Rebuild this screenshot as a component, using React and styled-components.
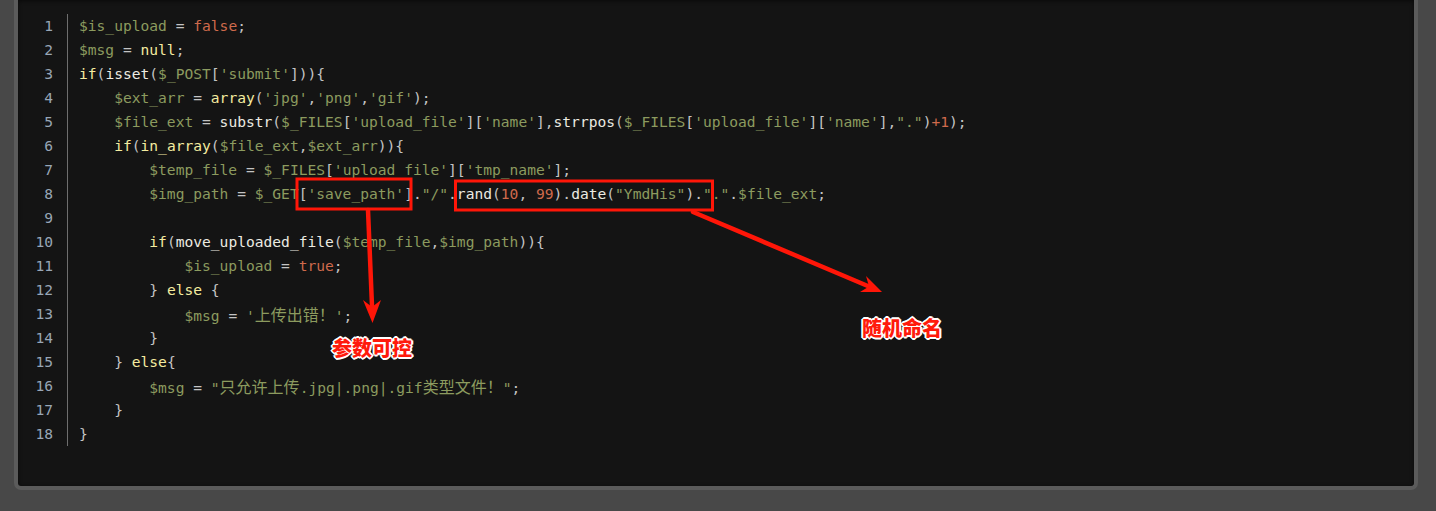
import React from 'react'
import styled, { createGlobalStyle } from 'styled-components'

const GlobalStyle = createGlobalStyle`
  html, body {
    margin: 0;
    padding: 0;
    background: #484848;
  }
`

// 토큰 색상
const colors = {
  v: '#8c9b5f',
  s: '#8c9b5f',
  k: '#f4eca0',
  f: '#ecebe2',
  c: '#cf6a4c',
  p: '#c4c4c4',
}

const Page = styled.div`
  position: relative;
  width: 1436px;
  height: 511px;
  overflow: hidden;
`

const Frame = styled.div`
  margin-left: 14px;
  width: 1404px;
  height: 490px;
  box-sizing: border-box;
  border: 4px solid #5b5b5b;
  border-top: 0;
  border-radius: 0 0 7px 7px;
  background: #141414;
  box-shadow: inset 0 1px 4px rgba(0, 0, 0, 0.6);
`

const CodeBlock = styled.div`
  display: flex;
  padding-top: 14px;
  font-family: "DejaVu Sans Mono", "Liberation Mono", monospace;
  font-size: 14.6px;
  line-height: 24px;
`

const Gutter = styled.div`
  width: 35px;
  padding-right: 14px;
  border-right: 1px solid #6e6e6e;
  text-align: right;
  color: #98a6b6;
`

const Code = styled.div`
  padding-left: 11px;
  white-space: pre;
`

const Line = styled.div`
  height: 24px;
`

const Tok = styled.span`
  color: ${p => colors[p.$t]};
`

const Cjk = styled.span`
  font-family: "Noto Sans CJK SC", sans-serif;
  font-size: 16px;
`

const Overlay = styled.svg`
  position: absolute;
  top: 0;
  left: 0;
  pointer-events: none;
`

const Label = styled.div`
  position: absolute;
  left: ${p => p.$x}px;
  top: ${p => p.$y}px;
  font-family: "Noto Sans CJK SC", sans-serif;
  font-size: 20px;
  font-weight: 900;
  line-height: 24px;
  color: #ff1a0c;
  text-shadow:
    -2px 0 #fff, 2px 0 #fff, 0 -2px #fff, 0 2px #fff,
    -1px -1px #fff, 1px 1px #fff, -1px 1px #fff, 1px -1px #fff;
`

const withCjk = text =>
  text.split(/([\u3000-\u9fff\uff00-\uffef]+)/).map((part, i) =>
    /[\u3000-\u9fff\uff00-\uffef]/.test(part) ? <Cjk key={i}>{part}</Cjk> : part
  )

const code = [
  [['v', '$is_upload'], ['p', ' = '], ['c', 'false'], ['p', ';']],
  [['v', '$msg'], ['p', ' = '], ['k', 'null'], ['p', ';']],
  [['k', 'if'], ['p', '('], ['f', 'isset'], ['p', '('], ['v', '$_POST'], ['p', '['], ['s', "'submit'"], ['p', ']))'], ['p', '{']],
  [['p', '    '], ['v', '$ext_arr'], ['p', ' = '], ['k', 'array'], ['p', '('], ['s', "'jpg'"], ['p', ','], ['s', "'png'"], ['p', ','], ['s', "'gif'"], ['p', ');']],
  [['p', '    '], ['v', '$file_ext'], ['p', ' = '], ['f', 'substr'], ['p', '('], ['v', '$_FILES'], ['p', '['], ['s', "'upload_file'"], ['p', ']['], ['s', "'name'"], ['p', '],'], ['f', 'strrpos'], ['p', '('], ['v', '$_FILES'], ['p', '['], ['s', "'upload_file'"], ['p', ']['], ['s', "'name'"], ['p', '],'], ['s', '"."'], ['p', ')'], ['c', '+1'], ['p', ');']],
  [['p', '    '], ['k', 'if'], ['p', '('], ['k', 'in_array'], ['p', '('], ['v', '$file_ext'], ['p', ','], ['v', '$ext_arr'], ['p', ')){']],
  [['p', '        '], ['v', '$temp_file'], ['p', ' = '], ['v', '$_FILES'], ['p', '['], ['s', "'upload_file'"], ['p', ']['], ['s', "'tmp_name'"], ['p', '];']],
  [['p', '        '], ['v', '$img_path'], ['p', ' = '], ['v', '$_GET'], ['p', '['], ['s', "'save_path'"], ['p', '].'], ['s', '"/"'], ['p', '.'], ['f', 'rand'], ['p', '('], ['c', '10'], ['p', ', '], ['c', '99'], ['p', ').'], ['f', 'date'], ['p', '('], ['s', '"YmdHis"'], ['p', ').'], ['s', '"."'], ['p', '.'], ['v', '$file_ext'], ['p', ';']],
  [],
  [['p', '        '], ['k', 'if'], ['p', '('], ['f', 'move_uploaded_file'], ['p', '('], ['v', '$temp_file'], ['p', ','], ['v', '$img_path'], ['p', ')){']],
  [['p', '            '], ['v', '$is_upload'], ['p', ' = '], ['c', 'true'], ['p', ';']],
  [['p', '        } '], ['k', 'else'], ['p', ' {']],
  [['p', '            '], ['v', '$msg'], ['p', ' = '], ['s', "'上传出错！'"], ['p', ';']],
  [['p', '        }']],
  [['p', '    } '], ['k', 'else'], ['p', '{']],
  [['p', '        '], ['v', '$msg'], ['p', ' = '], ['s', '"只允许上传.jpg|.png|.gif类型文件！"'], ['p', ';']],
  [['p', '    }']],
  [['p', '}']],
]

const App = () => {
  return (
    <Page>
      <GlobalStyle />
      <Frame>
        <CodeBlock>
          <Gutter>
            {code.map((_, i) => <Line key={i}>{i + 1}</Line>)}
          </Gutter>
          <Code>
            {code.map((toks, i) => (
              <Line key={i}>
                {toks.map(([t, text], j) => <Tok key={j} $t={t}>{withCjk(text)}</Tok>)}
              </Line>
            ))}
          </Code>
        </CodeBlock>
      </Frame>

      {/* 빨간 표시 */}
      <Overlay width="1436" height="511" viewBox="0 0 1436 511">
        <g fill="none" stroke="#ff1608" strokeWidth="3">
          <rect x="297" y="179" width="114" height="30" />
          <rect x="455.5" y="181" width="257" height="29" />
        </g>
        <g stroke="#ff1608" strokeLinecap="round">
          <line x1="368" y1="210" x2="372" y2="306" strokeWidth="4.5" />
          <line x1="693" y1="212" x2="869" y2="286.5" strokeWidth="4.5" />
        </g>
        <g fill="#ff1608">
          <polygon points="372.5,323 363,300 372,307 381,300" />
          <polygon points="882,292 860,292 869,286.5 866,276" />
        </g>
      </Overlay>
      <Label $x={332} $y={336}>参数可控</Label>
      <Label $x={862} $y={316}>随机命名</Label>
    </Page>
  )
}

export default App
